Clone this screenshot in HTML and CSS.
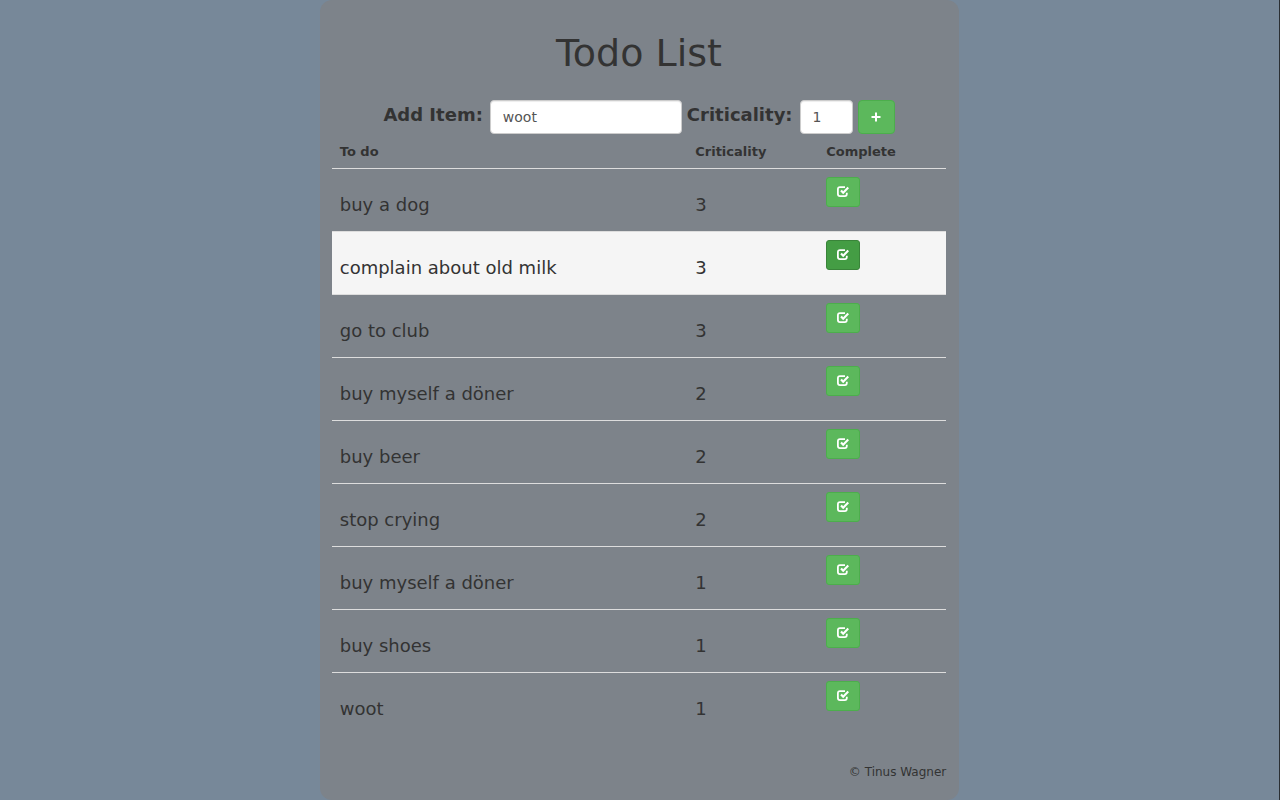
FILE: index.html
```html
<!DOCTYPE html>
<html lang="en">
<head>
<meta charset="utf-8">
<title>Todo List</title>
<link rel="stylesheet" href="styles.css">
</head>
<body>
<svg class="sprite" aria-hidden="true">
  <symbol id="check" viewBox="0 0 12 12">
    <path d="M8 1.1H3Q0.9 1.1 0.9 3.2V8.1Q0.9 10.2 3 10.2H7.7Q9.8 10.2 9.8 8.1V6.8" fill="none" stroke="currentColor" stroke-width="1.8"/>
    <path d="M4 4.5L6.2 6.7L11.3 1.5" fill="none" stroke="currentColor" stroke-width="2.2"/>
  </symbol>
</svg>
<main class="panel">
  <h1 class="title">Todo List</h1>
  <form class="add-form">
    <div class="field">
      <label for="item">Add Item:</label>
      <input class="control item" id="item" type="text" value="woot">
    </div>
    <div class="field">
      <label for="criticality">Criticality:</label>
      <input class="control level" id="criticality" type="text" value="1">
    </div>
    <button class="btn add" type="button" aria-label="Add"><svg class="plus" viewBox="0 0 10 10" aria-hidden="true"><path d="M5 0.5V9.5M0.5 5H9.5" stroke="currentColor" stroke-width="2"/></svg></button>
  </form>
  <table class="todos">
    <thead>
      <tr><th class="name">To do</th><th class="crit">Criticality</th><th class="done">Complete</th></tr>
    </thead>
    <tbody>
      <tr><td><p>buy a dog</p></td><td><p>3</p></td><td><button class="btn" type="button" aria-label="Complete"><svg class="icon"><use href="#check"/></svg></button></td></tr>
      <tr class="active"><td><p>complain about old milk</p></td><td><p>3</p></td><td><button class="btn" type="button" aria-label="Complete"><svg class="icon"><use href="#check"/></svg></button></td></tr>
      <tr><td><p>go to club</p></td><td><p>3</p></td><td><button class="btn" type="button" aria-label="Complete"><svg class="icon"><use href="#check"/></svg></button></td></tr>
      <tr><td><p>buy myself a döner</p></td><td><p>2</p></td><td><button class="btn" type="button" aria-label="Complete"><svg class="icon"><use href="#check"/></svg></button></td></tr>
      <tr><td><p>buy beer</p></td><td><p>2</p></td><td><button class="btn" type="button" aria-label="Complete"><svg class="icon"><use href="#check"/></svg></button></td></tr>
      <tr><td><p>stop crying</p></td><td><p>2</p></td><td><button class="btn" type="button" aria-label="Complete"><svg class="icon"><use href="#check"/></svg></button></td></tr>
      <tr><td><p>buy myself a döner</p></td><td><p>1</p></td><td><button class="btn" type="button" aria-label="Complete"><svg class="icon"><use href="#check"/></svg></button></td></tr>
      <tr><td><p>buy shoes</p></td><td><p>1</p></td><td><button class="btn" type="button" aria-label="Complete"><svg class="icon"><use href="#check"/></svg></button></td></tr>
      <tr><td><p>woot</p></td><td><p>1</p></td><td><button class="btn" type="button" aria-label="Complete"><svg class="icon"><use href="#check"/></svg></button></td></tr>
    </tbody>
  </table>
  <footer class="footer">© Tinus Wagner</footer>
</main>
</body>
</html>
```

FILE: styles.css
```css
* { box-sizing: border-box; }

body {
  margin: 0;
  min-height: 100vh;
  background: #778899;
  border-right: 1px solid #2b2f33;
  color: #333;
  font: 13px/18px Verdana, "DejaVu Sans", sans-serif;
}

.sprite { display: none; }

.panel {
  width: 50%;
  margin: 0 auto;
  padding: 33px 13px 19px 12px;
  border-radius: 12px;
  background: #7d838a;
}

.title {
  margin: 0 0 27px;
  font-size: 38px;
  line-height: 40px;
  font-weight: 400;
  text-align: center;
}

.add-form {
  display: flex;
  justify-content: center;
  gap: 5px;
}

.field {
  display: flex;
  gap: 7px;
  font-size: 18px;
  line-height: 30px;
  font-weight: 700;
}

.control {
  height: 34px;
  padding: 6px 12px;
  border: 1px solid #ccc;
  border-radius: 4px;
  background: #fff;
  box-shadow: inset 0 1px 1px rgba(0, 0, 0, .075);
  color: #555;
  font: 14px/20px Verdana, "DejaVu Sans", sans-serif;
}

.item { width: 192px; }
.level { width: 53px; }

.btn {
  display: flex;
  align-items: center;
  justify-content: center;
  width: 34px;
  height: 30px;
  padding: 0;
  border: 1px solid #4cae4c;
  border-radius: 3px;
  background: #5cb85c;
  color: #fff;
}

.add {
  width: 37px;
  height: 34px;
  border-radius: 4px;
}

.icon { width: 12px; height: 12px; }
.plus { width: 10px; height: 10px; }

.todos {
  width: 100%;
  border-spacing: 0;
  table-layout: fixed;
}

th {
  padding: 9px 8px 7px;
  font-size: 13px;
  line-height: 18px;
  text-align: left;
}

.crit { width: 131px; }
.done { width: 128px; }

td {
  padding: 8px;
  border-top: 1px solid #ddd;
  vertical-align: top;
}

td p {
  margin: 18px 0 8px;
  font-size: 18px;
  line-height: 20px;
}

.active td { background: #f5f5f5; }

.active .btn {
  border-color: #398439;
  background: #449d44;
}

.footer {
  margin-top: 28px;
  font-size: 12px;
  line-height: 18px;
  text-align: right;
}
```
